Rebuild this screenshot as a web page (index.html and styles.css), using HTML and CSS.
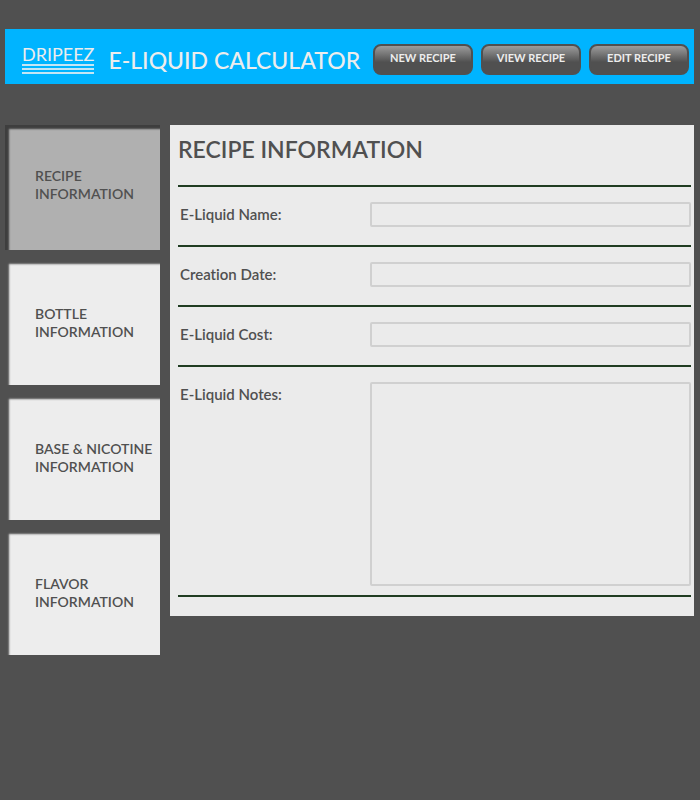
FILE: index.html
```
<!DOCTYPE html>
<html lang="en">
<head>
<meta charset="utf-8">
<title>Dripeez E-Liquid Calculator</title>
<link rel="stylesheet" href="styles.css">
</head>
<body>
<header class="header">
  <div class="logo">
    <span class="logo-name">DRIPEEZ</span>
    <span class="logo-lines"></span>
  </div>
  <h1 class="app-title">E-LIQUID CALCULATOR</h1>
  <div class="actions">
    <button class="action" type="button">NEW RECIPE</button>
    <button class="action" type="button">VIEW RECIPE</button>
    <button class="action" type="button">EDIT RECIPE</button>
  </div>
</header>
<div class="layout">
  <nav class="tabs">
    <a class="tab tab-active" href="#recipe">RECIPE<br>INFORMATION</a>
    <a class="tab" href="#bottle">BOTTLE<br>INFORMATION</a>
    <a class="tab" href="#base">BASE &amp; NICOTINE<br>INFORMATION</a>
    <a class="tab" href="#flavor">FLAVOR<br>INFORMATION</a>
  </nav>
  <main class="panel" id="recipe">
    <h2 class="panel-title">RECIPE INFORMATION</h2>
    <form class="form">
      <div class="row">
        <label class="label" for="name">E-Liquid Name:</label>
        <input class="field" id="name" type="text">
      </div>
      <div class="row">
        <label class="label" for="date">Creation Date:</label>
        <input class="field" id="date" type="text">
      </div>
      <div class="row">
        <label class="label" for="cost">E-Liquid Cost:</label>
        <input class="field" id="cost" type="text">
      </div>
      <div class="row row-notes">
        <label class="label" for="notes">E-Liquid Notes:</label>
        <textarea class="field field-notes" id="notes"></textarea>
      </div>
    </form>
  </main>
</div>
</body>
</html>
```
FILE: styles.css
```
* {
  box-sizing: border-box;
}

body {
  margin: 0;
  padding: 29px 6px 29px 5px;
  background: #505050;
  color: #505050;
  font-family: Lato, sans-serif;
  font-variant-ligatures: none;
}

.header {
  display: flex;
  align-items: center;
  min-height: 55px;
  padding: 0 5px 0 17px;
  background: #00b4ff;
  color: #ededed;
}

.logo {
  display: flex;
  flex-direction: column;
  flex: none;
  margin-right: 14px;
  padding-top: 4px;
}

.logo-name {
  font-size: 18px;
  line-height: 20px;
}

.logo-lines {
  height: 10px;
  background: repeating-linear-gradient(#c4e6f5 0 2px, transparent 2px 4px);
}

.app-title {
  flex: none;
  margin: 0;
  padding-top: 6px;
  font-size: 23px;
  line-height: 30px;
  font-weight: 500;
}

.actions {
  display: flex;
  gap: 8px;
  margin-left: auto;
  padding-top: 6px;
}

.action {
  width: 100px;
  height: 31px;
  padding: 0 0 4px;
  border: 2px solid #505050;
  border-radius: 8px;
  background: linear-gradient(#9c9c9c, #505050 60%);
  color: #ededed;
  font-family: inherit;
  font-size: 11px;
  font-weight: 700;
}

.layout {
  display: flex;
  align-items: flex-start;
  gap: 10px;
  margin-top: 41px;
}

.tabs {
  display: flex;
  flex-direction: column;
  flex: none;
  gap: 10px;
  width: 155px;
}

.tab {
  display: flex;
  align-items: center;
  height: 125px;
  padding-left: 30px;
  background: #ededed;
  box-shadow: inset 4px 4px 2px #505050;
  color: #505050;
  font-size: 14px;
  line-height: 18px;
  font-weight: 600;
  text-decoration: none;
  white-space: nowrap;
}

.tab-active {
  padding-bottom: 6px;
  background: #b0b0b0;
  box-shadow: inset 4px 4px 2px #3e3e3e;
}

.panel {
  flex: 1;
  padding: 8px 3px 19px 8px;
  background: #ebebeb;
}

.panel-title {
  margin: 0 0 20px;
  font-size: 23px;
  line-height: 32px;
  font-weight: 600;
}

.form {
  border-bottom: 2px solid #203c22;
}

.row {
  display: flex;
  align-items: flex-start;
  height: 60px;
  padding: 15px 0 0 2px;
  border-top: 2px solid #203c22;
}

.row-notes {
  height: auto;
  padding-bottom: 9px;
}

.label {
  flex: none;
  width: 190px;
  font-size: 15px;
  line-height: 24px;
  font-weight: 600;
}

.field {
  flex: 1;
  min-width: 0;
  height: 25px;
  padding: 0 6px;
  border: 2px solid #d0d0d0;
  border-radius: 2px;
  background: transparent;
  color: #505050;
  font-family: inherit;
  font-size: 15px;
}

.field-notes {
  height: 204px;
  resize: none;
}
```
